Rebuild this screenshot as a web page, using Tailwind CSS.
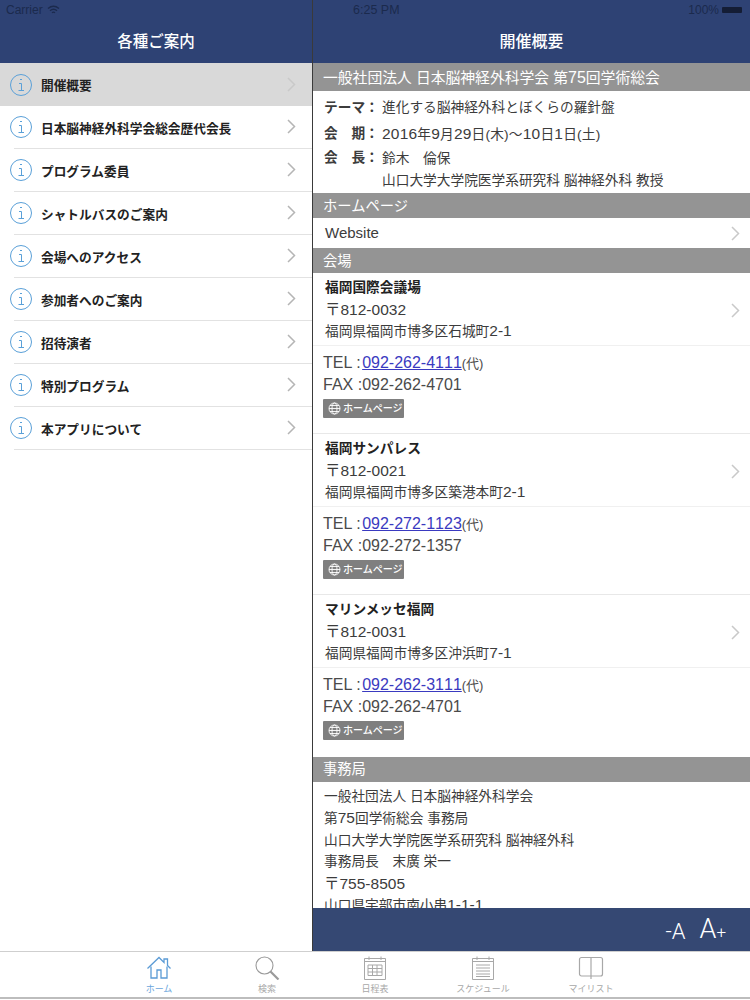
<!DOCTYPE html>
<html lang="ja">
<head>
  <meta charset="UTF-8" />
  <title>開催概要</title>
  <script src="https://cdn.jsdelivr.net/npm/@tailwindcss/browser@4"></script>
</head>
<body class="w-[750px] h-[1000px] overflow-hidden bg-white text-[#3c3c3c] font-['Liberation_Sans','Noto_Sans_CJK_JP',sans-serif]">
  <div class="flex h-[951px]">
    <!-- Left menu -->
    <div class="w-[312px] shrink-0 flex flex-col">
      <div class="h-[63px] bg-[#2e4274] shrink-0">
        <div class="h-5 flex items-center gap-1 pl-[6px] text-[12px] text-[#1b2a4d]">
          Carrier
          <svg width="13" height="10" viewBox="0 0 13 10" fill="none" stroke="#1b2a4d" stroke-width="1.4"><path d="M1 3.500C4.300 .8 8.700 .8 12 3.500"/><path d="M3 5.700C5 4.100 8 4.100 10 5.700"/><path d="M5 7.800C5.900 7 7.100 7 8 7.800"/></svg>
        </div>
        <div class="h-[43px] flex items-start justify-center pt-[10px] text-[15.500px] font-medium text-white">各種ご案内</div>
      </div>
      <div class="flex items-center h-[43px] bg-[#d9d9d9] pl-[9px] pr-[16px]">
        <svg width="24" height="24" viewBox="0 0 24 24" fill="none" stroke="#5aa0d8" stroke-width="1"><circle cx="12" cy="12" r="10.500"/><path d="M11 6.500h2M10 10.500h2.500v7M9.500 17.500h5.500"/></svg>
        <span class="ml-[8px] mt-[4px] flex-1 text-[12.700px] font-bold text-[#222]">開催概要</span>
        <svg width="9" height="15" viewBox="0 0 9 15" fill="none" stroke="#c9c9c9" stroke-width="1.500"><path d="M1 1l6.500 6.500L1 14"/></svg>
      </div>
      <div class="flex items-center h-[43px] pl-[9px] pr-[16px] pb-[2px] relative">
        <svg width="24" height="24" viewBox="0 0 24 24" fill="none" stroke="#5aa0d8" stroke-width="1"><circle cx="12" cy="12" r="10.500"/><path d="M11 6.500h2M10 10.500h2.500v7M9.500 17.500h5.500"/></svg>
        <span class="ml-[8px] mt-[6px] flex-1 text-[12.700px] font-bold text-[#222]">日本脳神経外科学会総会歴代会長</span>
        <svg width="9" height="15" viewBox="0 0 9 15" fill="none" stroke="#b5b5b5" stroke-width="1.500"><path d="M1 1l6.500 6.500L1 14"/></svg>
        <div class="absolute left-[14px] right-0 bottom-0 h-px bg-[#e2e2e2]"></div>
      </div>
      <div class="flex items-center h-[43px] pl-[9px] pr-[16px] pb-[2px] relative">
        <svg width="24" height="24" viewBox="0 0 24 24" fill="none" stroke="#5aa0d8" stroke-width="1"><circle cx="12" cy="12" r="10.500"/><path d="M11 6.500h2M10 10.500h2.500v7M9.500 17.500h5.500"/></svg>
        <span class="ml-[8px] mt-[6px] flex-1 text-[12.700px] font-bold text-[#222]">プログラム委員</span>
        <svg width="9" height="15" viewBox="0 0 9 15" fill="none" stroke="#b5b5b5" stroke-width="1.500"><path d="M1 1l6.500 6.500L1 14"/></svg>
        <div class="absolute left-[14px] right-0 bottom-0 h-px bg-[#e2e2e2]"></div>
      </div>
      <div class="flex items-center h-[43px] pl-[9px] pr-[16px] pb-[2px] relative">
        <svg width="24" height="24" viewBox="0 0 24 24" fill="none" stroke="#5aa0d8" stroke-width="1"><circle cx="12" cy="12" r="10.500"/><path d="M11 6.500h2M10 10.500h2.500v7M9.500 17.500h5.500"/></svg>
        <span class="ml-[8px] mt-[6px] flex-1 text-[12.700px] font-bold text-[#222]">シャトルバスのご案内</span>
        <svg width="9" height="15" viewBox="0 0 9 15" fill="none" stroke="#b5b5b5" stroke-width="1.500"><path d="M1 1l6.500 6.500L1 14"/></svg>
        <div class="absolute left-[14px] right-0 bottom-0 h-px bg-[#e2e2e2]"></div>
      </div>
      <div class="flex items-center h-[43px] pl-[9px] pr-[16px] pb-[2px] relative">
        <svg width="24" height="24" viewBox="0 0 24 24" fill="none" stroke="#5aa0d8" stroke-width="1"><circle cx="12" cy="12" r="10.500"/><path d="M11 6.500h2M10 10.500h2.500v7M9.500 17.500h5.500"/></svg>
        <span class="ml-[8px] mt-[6px] flex-1 text-[12.700px] font-bold text-[#222]">会場へのアクセス</span>
        <svg width="9" height="15" viewBox="0 0 9 15" fill="none" stroke="#b5b5b5" stroke-width="1.500"><path d="M1 1l6.500 6.500L1 14"/></svg>
        <div class="absolute left-[14px] right-0 bottom-0 h-px bg-[#e2e2e2]"></div>
      </div>
      <div class="flex items-center h-[43px] pl-[9px] pr-[16px] pb-[2px] relative">
        <svg width="24" height="24" viewBox="0 0 24 24" fill="none" stroke="#5aa0d8" stroke-width="1"><circle cx="12" cy="12" r="10.500"/><path d="M11 6.500h2M10 10.500h2.500v7M9.500 17.500h5.500"/></svg>
        <span class="ml-[8px] mt-[6px] flex-1 text-[12.700px] font-bold text-[#222]">参加者へのご案内</span>
        <svg width="9" height="15" viewBox="0 0 9 15" fill="none" stroke="#b5b5b5" stroke-width="1.500"><path d="M1 1l6.500 6.500L1 14"/></svg>
        <div class="absolute left-[14px] right-0 bottom-0 h-px bg-[#e2e2e2]"></div>
      </div>
      <div class="flex items-center h-[43px] pl-[9px] pr-[16px] pb-[2px] relative">
        <svg width="24" height="24" viewBox="0 0 24 24" fill="none" stroke="#5aa0d8" stroke-width="1"><circle cx="12" cy="12" r="10.500"/><path d="M11 6.500h2M10 10.500h2.500v7M9.500 17.500h5.500"/></svg>
        <span class="ml-[8px] mt-[6px] flex-1 text-[12.700px] font-bold text-[#222]">招待演者</span>
        <svg width="9" height="15" viewBox="0 0 9 15" fill="none" stroke="#b5b5b5" stroke-width="1.500"><path d="M1 1l6.500 6.500L1 14"/></svg>
        <div class="absolute left-[14px] right-0 bottom-0 h-px bg-[#e2e2e2]"></div>
      </div>
      <div class="flex items-center h-[43px] pl-[9px] pr-[16px] pb-[2px] relative">
        <svg width="24" height="24" viewBox="0 0 24 24" fill="none" stroke="#5aa0d8" stroke-width="1"><circle cx="12" cy="12" r="10.500"/><path d="M11 6.500h2M10 10.500h2.500v7M9.500 17.500h5.500"/></svg>
        <span class="ml-[8px] mt-[6px] flex-1 text-[12.700px] font-bold text-[#222]">特別プログラム</span>
        <svg width="9" height="15" viewBox="0 0 9 15" fill="none" stroke="#b5b5b5" stroke-width="1.500"><path d="M1 1l6.500 6.500L1 14"/></svg>
        <div class="absolute left-[14px] right-0 bottom-0 h-px bg-[#e2e2e2]"></div>
      </div>
      <div class="flex items-center h-[43px] pl-[9px] pr-[16px] pb-[2px] relative">
        <svg width="24" height="24" viewBox="0 0 24 24" fill="none" stroke="#5aa0d8" stroke-width="1"><circle cx="12" cy="12" r="10.500"/><path d="M11 6.500h2M10 10.500h2.500v7M9.500 17.500h5.500"/></svg>
        <span class="ml-[8px] mt-[6px] flex-1 text-[12.700px] font-bold text-[#222]">本アプリについて</span>
        <svg width="9" height="15" viewBox="0 0 9 15" fill="none" stroke="#b5b5b5" stroke-width="1.500"><path d="M1 1l6.500 6.500L1 14"/></svg>
        <div class="absolute left-[14px] right-0 bottom-0 h-px bg-[#e2e2e2]"></div>
      </div>
    </div>

    <!-- Right detail -->
    <div class="w-[438px] shrink-0 flex flex-col border-l border-[#3a3a3a]">
      <div class="h-[63px] bg-[#2e4274] shrink-0">
        <div class="h-5 flex items-center pl-[40px] text-[12.500px] font-medium text-[#1b2a4d]">6:25 PM
          <span class="ml-auto text-[12px]">100%</span>
          <span class="ml-[3px] mr-[8px] w-[20px] h-[6px] bg-[#141d35] rounded-[1px]"></span>
        </div>
        <div class="h-[43px] flex items-start justify-center pt-[10px] text-[16px] font-medium text-white">開催概要</div>
      </div>
      <div class="flex-1 overflow-hidden text-[13.700px]">
        <div class="h-[28px] flex items-center pl-[10px] pt-[1px] bg-[#949494] text-white text-[14.800px]"><span>一般社団法人 日本脳神経外科学会 第<span class="text-[16px]">75</span>回学術総会</span></div>
        <div class="h-[102px] pl-[11px] pt-[7px] leading-[19px]">
          <div class="flex h-[26px]"><b class="w-[58px]">テーマ：</b><span>進化する脳神経外科とぼくらの羅針盤</span></div>
          <div class="flex h-[24px]"><b class="w-[58px]">会　期：</b><span class="tracking-[0.2px]"><span class="text-[15.500px]">2016</span>年<span class="text-[15.500px]">9</span>月<span class="text-[15.500px]">29</span>日(木)～<span class="text-[15.500px]">10</span>日<span class="text-[15.500px]">1</span>日(土)</span></div>
          <div class="flex"><b class="w-[58px]">会　長：</b><span class="leading-[22px]">鈴木　倫保<br>山口大学大学院医学系研究科 脳神経外科 教授</span></div>
        </div>
        <div class="h-[25px] flex items-center pl-[10px] pt-[2px] bg-[#949494] text-white text-[14.300px]">ホームページ</div>
        <div class="h-[30px] flex items-center pl-[12px] pr-[10px] text-[15px] justify-between">Website
          <svg width="9" height="15" viewBox="0 0 9 15" fill="none" stroke="#c9c9c9" stroke-width="1.500"><path d="M1 1l6.500 6.500L1 14"/></svg>
        </div>
        <div class="h-[25px] flex items-center pl-[10px] pt-[2px] bg-[#949494] text-white text-[14.300px]">会場</div>

        <div class="h-[161px] border-b border-[#e8e8e8]">
          <div class="h-[73px] pl-[12px] pr-[10px] pt-[2px] flex items-center justify-between border-b border-[#f0f0f0] leading-[21.500px]">
            <div><b class="text-[#222]">福岡国際会議場</b><div class="text-[15.500px]">〒812-0032</div><div>福岡県福岡市博多区石城町<span class="text-[15.500px]">2-1</span></div></div>
            <svg width="9" height="15" viewBox="0 0 9 15" fill="none" stroke="#c9c9c9" stroke-width="1.500"><path d="M1 1l6.500 6.500L1 14"/></svg>
          </div>
          <div class="pl-[10px] pt-[6px] leading-[21px] text-[16px] text-[#4a4a4a]">
            <div><span class="mr-[1.500px]">TEL :</span><a class="text-[#3a3ac0] underline [font-kerning:none]">092-262-4111</a><span class="text-[13px]">(代)</span></div>
            <div>FAX :092-262-4701</div>
            <div class="mt-[4px] w-[81px] h-[19px] bg-[#7f7f7f] rounded-[1px] flex items-center gap-[2px] pl-[5px] text-white text-[10px] font-medium">
              <svg width="13" height="13" viewBox="0 0 13 13" fill="none" stroke="#fff" stroke-width=".9"><circle cx="6.500" cy="6.500" r="5.500"/><ellipse cx="6.500" cy="6.500" rx="2.500" ry="5.500"/><path d="M1 6.500h11M2 3.500h9M2 9.500h9"/></svg>
              ホームページ
            </div>
          </div>
        </div>
        <div class="h-[161px] border-b border-[#e8e8e8]">
          <div class="h-[73px] pl-[12px] pr-[10px] pt-[2px] flex items-center justify-between border-b border-[#f0f0f0] leading-[21.500px]">
            <div><b class="text-[#222]">福岡サンパレス</b><div class="text-[15.500px]">〒812-0021</div><div>福岡県福岡市博多区築港本町<span class="text-[15.500px]">2-1</span></div></div>
            <svg width="9" height="15" viewBox="0 0 9 15" fill="none" stroke="#c9c9c9" stroke-width="1.500"><path d="M1 1l6.500 6.500L1 14"/></svg>
          </div>
          <div class="pl-[10px] pt-[6px] leading-[21px] text-[16px] text-[#4a4a4a]">
            <div><span class="mr-[1.500px]">TEL :</span><a class="text-[#3a3ac0] underline [font-kerning:none]">092-272-1123</a><span class="text-[13px]">(代)</span></div>
            <div>FAX :092-272-1357</div>
            <div class="mt-[4px] w-[81px] h-[19px] bg-[#7f7f7f] rounded-[1px] flex items-center gap-[2px] pl-[5px] text-white text-[10px] font-medium">
              <svg width="13" height="13" viewBox="0 0 13 13" fill="none" stroke="#fff" stroke-width=".9"><circle cx="6.500" cy="6.500" r="5.500"/><ellipse cx="6.500" cy="6.500" rx="2.500" ry="5.500"/><path d="M1 6.500h11M2 3.500h9M2 9.500h9"/></svg>
              ホームページ
            </div>
          </div>
        </div>
        <div class="h-[162px]">
          <div class="h-[73px] pl-[12px] pr-[10px] pt-[2px] flex items-center justify-between border-b border-[#f0f0f0] leading-[21.500px]">
            <div><b class="text-[#222]">マリンメッセ福岡</b><div class="text-[15.500px]">〒812-0031</div><div>福岡県福岡市博多区沖浜町<span class="text-[15.500px]">7-1</span></div></div>
            <svg width="9" height="15" viewBox="0 0 9 15" fill="none" stroke="#c9c9c9" stroke-width="1.500"><path d="M1 1l6.500 6.500L1 14"/></svg>
          </div>
          <div class="pl-[10px] pt-[6px] leading-[21px] text-[16px] text-[#4a4a4a]">
            <div><span class="mr-[1.500px]">TEL :</span><a class="text-[#3a3ac0] underline [font-kerning:none]">092-262-3111</a><span class="text-[13px]">(代)</span></div>
            <div>FAX :092-262-4701</div>
            <div class="mt-[4px] w-[81px] h-[19px] bg-[#7f7f7f] rounded-[1px] flex items-center gap-[2px] pl-[5px] text-white text-[10px] font-medium">
              <svg width="13" height="13" viewBox="0 0 13 13" fill="none" stroke="#fff" stroke-width=".9"><circle cx="6.500" cy="6.500" r="5.500"/><ellipse cx="6.500" cy="6.500" rx="2.500" ry="5.500"/><path d="M1 6.500h11M2 3.500h9M2 9.500h9"/></svg>
              ホームページ
            </div>
          </div>
        </div>

        <div class="h-[25px] flex items-center pl-[10px] bg-[#949494] text-white text-[14.300px]">事務局</div>
        <div class="pl-[11px] pt-[4px] leading-[21.400px] text-[13.700px]">
          <div>一般社団法人 日本脳神経外科学会</div>
          <div>第<span class="text-[15.500px]">75</span>回学術総会 事務局</div>
          <div>山口大学大学院医学系研究科 脳神経外科</div>
          <div>事務局長　末廣 栄一</div>
          <div class="text-[15.500px]">〒755-8505</div>
          <div>山口県宇部市南小串<span class="text-[15.500px] [font-kerning:none]">1-1-1</span></div>
        </div>
      </div>
      <div class="h-[43px] shrink-0 bg-[#354873] flex items-center justify-end text-white font-['Roboto',sans-serif] font-light">
        <span class="text-[22px] mr-[14px] mt-[4px]">-A</span>
        <span class="text-[27px] mr-[24px]">A<span class="text-[17px]">+</span></span>
      </div>
    </div>
  </div>

  <!-- Tab bar -->
  <div class="h-[48px] border-t border-[#cfcfcf] border-b-2 border-b-[#bdbdbd] flex justify-center text-[9px] text-[#a8a8a8]">
    <div class="w-[108px] flex flex-col items-center pt-[4px] text-[#6aa6dc]">
      <svg width="26" height="24" viewBox="0 0 26 24" fill="none" stroke="#5b9bd5" stroke-width="1.300"><path d="M1.500 12.500L13 1.500l5 5V3h3.500v6.500l3 3"/><path d="M5 10.500V22h6v-8h4v8h6V10.500"/></svg>
      <span class="mt-[3px]">ホーム</span>
    </div>
    <div class="w-[108px] flex flex-col items-center pt-[4px]">
      <svg width="26" height="24" viewBox="0 0 26 24" fill="none" stroke="#9a9a9a" stroke-width="1.100"><circle cx="10.500" cy="9.500" r="8.500"/><path stroke-width="2.200" d="M16.500 15.500l8 8"/></svg>
      <span class="mt-[3px]">検索</span>
    </div>
    <div class="w-[108px] flex flex-col items-center pt-[4px]">
      <svg width="26" height="24" viewBox="0 0 26 24" fill="none" stroke="#a8a8a8"><path d="M2.500 2.500h21v21h-21zM2.500 5.500h21M7 .5v3.500M19 .5v3.500M6 9h14v10.500H6zM6 12.500h14M6 16h14M10.500 9v10.500M15 9v10.500"/></svg>
      <span class="mt-[3px]">日程表</span>
    </div>
    <div class="w-[108px] flex flex-col items-center pt-[4px]">
      <svg width="26" height="24" viewBox="0 0 26 24" fill="none" stroke="#a8a8a8"><path d="M2.500 2.500h21v21h-21zM2.500 5.500h21M7 .5v3.500M19 .5v3.500M6 9h14M6 12h14M6 15h14M6 18h14M6 20.500h14"/></svg>
      <span class="mt-[3px]">スケジュール</span>
    </div>
    <div class="w-[108px] flex flex-col items-center pt-[4px]">
      <svg width="26" height="24" viewBox="0 0 26 24" fill="none" stroke="#a8a8a8" stroke-width="1.200"><rect x="1.500" y="1.500" width="23" height="18.500" rx="2"/><path d="M13 1.500V23"/></svg>
      <span class="mt-[3px]">マイリスト</span>
    </div>
  </div>
</body>
</html>
